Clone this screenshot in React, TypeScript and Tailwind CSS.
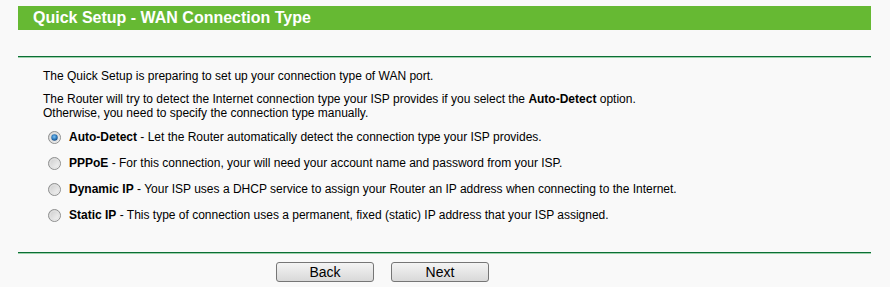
import React from "react";

function Radio({ checked }: { checked?: boolean }) {
  return (
    <svg width="13" height="13" viewBox="0 0 13 13" className="shrink-0">
      <defs>
        <linearGradient id={checked ? "rg1" : "rg0"} x1="0" y1="0" x2="1" y2="1">
          <stop offset="0" stopColor="#c8c8c8" />
          <stop offset="1" stopColor="#fafafa" />
        </linearGradient>
        <radialGradient id="dot" cx="0.45" cy="0.4" r="0.6">
          <stop offset="0" stopColor="#7fc1f0" />
          <stop offset="0.6" stopColor="#2f7dc0" />
          <stop offset="1" stopColor="#174a80" />
        </radialGradient>
      </defs>
      <circle cx="6.5" cy="6.5" r="6" fill={checked ? "url(#rg1)" : "url(#rg0)"} stroke="#8e8f8f" strokeWidth="1" />
      <circle cx="6.5" cy="6.5" r="4.5" fill="none" stroke="#e2e2e2" strokeWidth="1" />
      {checked && <circle cx="6.5" cy="6.5" r="3.2" fill="url(#dot)" />}
    </svg>
  );
}

function Row({ checked, label, text }: { checked?: boolean; label: string; text: string }) {
  return (
    <div className="h-[26px] flex items-center">
      <div className="ml-[30px] mr-[8px] flex items-center">
        <Radio checked={checked} />
      </div>
      <span>
        <b>{label}</b> - {text}
      </span>
    </div>
  );
}

function Line() {
  return (
    <div>
      <div className="h-px bg-[#0b6f35]" />
      <div className="h-px bg-[#9fd2ad]" />
    </div>
  );
}

function Btn({ children }: { children: React.ReactNode }) {
  return (
    <button className="w-[98px] h-[20px] rounded-[3px] border border-[#767676] bg-gradient-to-b from-[#f4f4f4] to-[#d9d9d9] text-[14px] leading-[18px] text-black font-['Liberation_Sans',Arial,sans-serif]">
      {children}
    </button>
  );
}

export default function App() {
  return (
    <div className="w-[890px] h-[287px] bg-[#f9f9f9] font-['Liberation_Sans',Arial,sans-serif] text-black text-[12px] leading-[14px] overflow-hidden">
      <div className="ml-[18px] w-[853px] pt-[6px]">
        <div className="h-[24px] bg-[#66b933] text-white font-bold text-[16px] leading-[24px] pl-[15px]">
          Quick Setup - WAN Connection Type
        </div>
        <div className="h-[26px]" />
        <Line />
        <div className="pl-[25px] pt-[11px]">
          <p>The Quick Setup is preparing to set up your connection type of WAN port.</p>
          <p className="mt-[9px]">
            The Router will try to detect the Internet connection type your ISP provides if you select the <b>Auto-Detect</b> option.
            <br />
            Otherwise, you need to specify the connection type manually.
          </p>
        </div>
        <div className="mt-[4px]">
          <Row checked label="Auto-Detect" text="Let the Router automatically detect the connection type your ISP provides." />
          <Row label="PPPoE" text="For this connection, your will need your account name and password from your ISP." />
          <Row label="Dynamic IP" text="Your ISP uses a DHCP service to assign your Router an IP address when connecting to the Internet." />
          <Row label="Static IP" text="This type of connection uses a permanent, fixed (static) IP address that your ISP assigned." />
        </div>
        <div className="h-[24px]" />
        <Line />
        <div className="mt-[8px] pl-[258px] flex gap-[17px]">
          <Btn>Back</Btn>
          <Btn>Next</Btn>
        </div>
      </div>
    </div>
  );
}
